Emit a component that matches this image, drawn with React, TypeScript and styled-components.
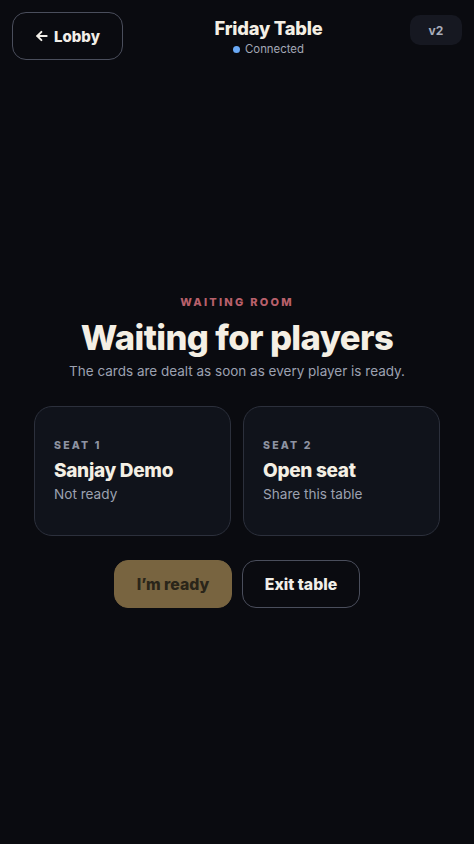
import styled, { createGlobalStyle } from "styled-components"

const GlobalStyle = createGlobalStyle`
  html, body {
    margin: 0;
    padding: 0;
    background: #0a0b10;
  }
  body {
    font-family: Inter, "Noto Sans", sans-serif;
    color: #f4efe4;
  }
  * {
    box-sizing: border-box;
  }
`;

const Page = styled.div`
  min-height: 844px;
  display: flex;
  flex-direction: column;
  background: #0a0b10;
`;

const Header = styled.header`
  display: flex;
  align-items: center;
  justify-content: space-between;
  padding: 12px 12px 0 12px;
  height: 60px;
`;

const BackButton = styled.button`
  width: 111px;
  height: 48px;
  border: 1px solid #4a4e5c;
  border-radius: 14px;
  background: transparent;
  color: #f1eee8;
  font-family: Inter, sans-serif;
  font-size: 15px;
  font-weight: 800;
  display: flex;
  align-items: center;
  justify-content: center;
  gap: 5px;
  cursor: pointer;
`;

const TitleBlock = styled.div`
  display: flex;
  flex-direction: column;
  align-items: center;
  margin-left: 4px;
  padding-top: 1px;
`;

const TableName = styled.h1`
  margin: 0;
  font-size: 18.3px;
  font-weight: 800;
  letter-spacing: -0.2px;
  color: #f4efe4;
  line-height: 22px;
`;

const Status = styled.div`
  display: flex;
  align-items: center;
  gap: 5px;
  margin-top: 3px;
  font-size: 11.4px;
  color: #a3a8b6;
`;

const Dot = styled.span`
  width: 7px;
  height: 7px;
  border-radius: 50%;
  background: #6aa9f5;
`;

const Version = styled.div`
  width: 52px;
  height: 30px;
  border-radius: 10px;
  background: #161821;
  color: #a9aebb;
  font-size: 12px;
  font-weight: 700;
  display: flex;
  align-items: center;
  justify-content: center;
  margin-top: -12px;
`;

const Main = styled.main`
  flex: 1;
  display: flex;
  flex-direction: column;
  align-items: center;
  padding: 235px 34px 0;
`;

const Eyebrow = styled.div`
  font-size: 11px;
  font-weight: 800;
  letter-spacing: 2.25px;
  color: #b8606b;
  text-transform: uppercase;
`;

const Heading = styled.h2`
  margin: 8px 0 0;
  font-size: 34.6px;
  font-weight: 800;
  letter-spacing: -0.6px;
  line-height: 40px;
  color: #f4efe4;
`;

const Lead = styled.p`
  margin: 6px 0 0;
  font-size: 13.5px;
  color: #9ca1b0;
`;

const Seats = styled.div`
  display: grid;
  grid-template-columns: 1fr 1fr;
  gap: 12px;
  width: 100%;
  margin-top: 27px;
`;

const SeatCard = styled.div`
  height: 130px;
  border: 1px solid #2c303c;
  border-radius: 18px;
  background: #10131b;
  padding: 32px 19px 0;
  display: flex;
  flex-direction: column;
`;

const SeatLabel = styled.div`
  font-size: 10.5px;
  font-weight: 800;
  letter-spacing: 2.2px;
  color: #8e93a2;
`;

const SeatName = styled.div`
  margin-top: 7px;
  font-size: 19px;
  font-weight: 800;
  letter-spacing: -0.3px;
  color: #f4efe4;
`;

const SeatStatus = styled.div`
  margin-top: 4px;
  font-size: 13.6px;
  color: #9ca1b0;
`;

const Actions = styled.div`
  display: flex;
  gap: 10px;
  margin-top: 24px;
`;

const ActionButton = styled.button<{ $primary?: boolean }>`
  width: 118px;
  height: 48px;
  border-radius: 14px;
  font-family: Inter, sans-serif;
  font-size: 15.8px;
  font-weight: 800;
  cursor: pointer;
  border: 1px solid ${(p) => (p.$primary ? "#786440" : "#4a4e5c")};
  background: ${(p) => (p.$primary ? "#786440" : "transparent")};
  color: ${(p) => (p.$primary ? "#2a2519" : "#f1eee8")};
`;

const seats = [
  { label: "SEAT 1", name: "Sanjay Demo", status: "Not ready" },
  { label: "SEAT 2", name: "Open seat", status: "Share this table" },
];

export default function App() {
  return (
    <Page>
      <GlobalStyle />
      <Header>
        <BackButton>
          <svg width="14" height="14" viewBox="0 0 24 24" fill="none" stroke="currentColor" strokeWidth="3.4" strokeLinecap="round" strokeLinejoin="round">
            <path d="M20 12H4" />
            <path d="M11 5l-7 7 7 7" />
          </svg>
          Lobby
        </BackButton>
        <TitleBlock>
          <TableName>Friday Table</TableName>
          <Status>
            <Dot />
            Connected
          </Status>
        </TitleBlock>
        <Version>v2</Version>
      </Header>
      <Main>
        <Eyebrow>Waiting room</Eyebrow>
        <Heading>Waiting for players</Heading>
        <Lead>The cards are dealt as soon as every player is ready.</Lead>
        <Seats>
          {seats.map((s) => (
            <SeatCard key={s.label}>
              <SeatLabel>{s.label}</SeatLabel>
              <SeatName>{s.name}</SeatName>
              <SeatStatus>{s.status}</SeatStatus>
            </SeatCard>
          ))}
        </Seats>
        <Actions>
          <ActionButton $primary>I’m ready</ActionButton>
          <ActionButton>Exit table</ActionButton>
        </Actions>
      </Main>
    </Page>
  )
}
